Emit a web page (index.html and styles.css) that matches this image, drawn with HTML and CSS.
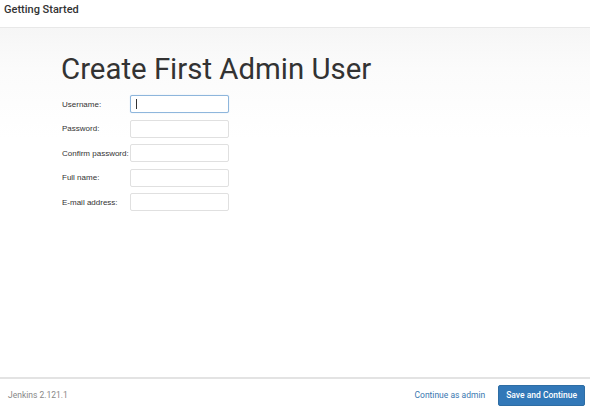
FILE: index.html
```html
<!DOCTYPE html>
<html>
<head>
<meta charset="utf-8">
<link rel="stylesheet" href="styles.css">
</head>
<body>
<div class="page">
  <header class="header">Getting Started</header>
  <main class="main">
    <h1 class="title">Create First Admin User</h1>
    <form class="form">
      <div class="row"><label class="label">Username:</label><div class="input focus"><span class="caret"></span></div></div>
      <div class="row"><label class="label">Password:</label><div class="input"></div></div>
      <div class="row"><label class="label">Confirm password:</label><div class="input"></div></div>
      <div class="row"><label class="label">Full name:</label><div class="input"></div></div>
      <div class="row"><label class="label">E-mail address:</label><div class="input"></div></div>
    </form>
  </main>
  <footer class="footer">
    <span class="version">Jenkins 2.121.1</span>
    <div class="actions">
      <span class="link">Continue as admin</span>
      <span class="btn">Save and Continue</span>
    </div>
  </footer>
</div>
</body>
</html>
```
FILE: styles.css
```css
html, body { margin: 0; padding: 0; background: #fff; }
.page {
  width: 590px; height: 411px;
  display: flex; flex-direction: column;
  font-family: Roboto, "Liberation Sans", sans-serif;
  color: #333;
}
.header {
  height: 28px; box-sizing: border-box;
  border-bottom: 1px solid #e8e8e8;
  padding: 3px 4px 0;
  font-size: 11px; font-weight: 500; line-height: 14px;
  color: #333;
}
.main {
  flex: 1;
  background: linear-gradient(to bottom, #f6f6f6 0px, #fbfbfb 40px, #fff 110px);
  padding: 25px 0 0 61px;
}
.title {
  margin: 0 0 10px;
  font-size: 29.4px; font-weight: 400; line-height: 32px;
  color: #333;
}
.form { display: flex; flex-direction: column; gap: 6.5px; margin-left: 1px; }
.row { display: flex; align-items: center; height: 18px; }
.label {
  width: 68px; white-space: nowrap;
  font-family: "Liberation Sans", Arial, sans-serif;
  font-size: 8px; color: #333;
}
.input {
  width: 99px; height: 18px; box-sizing: border-box;
  border: 1px solid #e0e0e0; border-radius: 2px; background: #fff;
  display: flex; align-items: center; padding-left: 5px;
}
.input.focus { border-color: #8eb6dc; box-shadow: 0 0 1px #a9c8e8; }
.caret { width: 1px; height: 10px; background: #333; }
.footer {
  height: 34px; box-sizing: border-box;
  border-top: 2px solid #e3e3e3;
  display: flex; align-items: center; justify-content: space-between;
  padding: 0 5px 0 8px;
}
.version { font-size: 8.5px; color: #888; }
.actions { display: flex; align-items: center; gap: 13px; }
.link { font-size: 8.5px; color: #3a77b0; }
.btn {
  background: #3278b8; border: 1px solid #2e6da4; border-radius: 2px;
  color: #fff; font-size: 8.5px; font-weight: 500;
  height: 21px; box-sizing: border-box; padding: 0 7px;
  display: flex; align-items: center;
}
```
